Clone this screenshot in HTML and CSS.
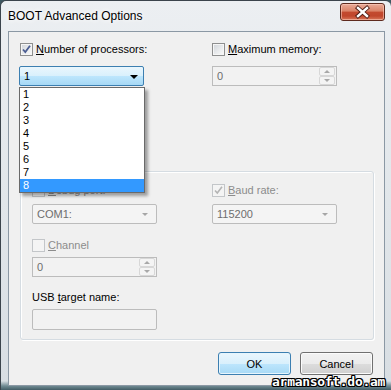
FILE: index.html
```html
<!DOCTYPE html>
<html>
<head>
  <meta charset="UTF-8">
  <title>BOOT Advanced Options</title>
  <link rel="stylesheet" href="styles.css">
</head>
<body>
  <div class="window">
    <div class="titlebar">
      <span class="title">BOOT Advanced Options</span>
      <span class="close">
        <svg width="45" height="18" viewBox="0 0 45 18">
          <path d="M18 5 L27 13 M27 5 L18 13" stroke="#4a1a12" stroke-width="4.2" stroke-linecap="square" fill="none"/>
          <path d="M18 5 L27 13 M27 5 L18 13" stroke="#ffffff" stroke-width="2.4" stroke-linecap="square" fill="none"/>
        </svg>
      </span>
    </div>

    <div class="client">
      <div class="top">
        <div class="col col-left">
          <div class="check-row">
            <span class="cb">
              <svg width="11" height="11" viewBox="0 0 11 11"><path d="M2 5.5 L4.3 8 L9 1.8" fill="none" stroke="#4b5d92" stroke-width="1.8"/></svg>
            </span>
            <span><u>N</u>umber of processors:</span>
          </div>
          <div class="combo focus"><span>1</span><i class="arrow"></i></div>

          <ul class="dropdown">
            <li>1</li>
            <li>2</li>
            <li>3</li>
            <li>4</li>
            <li>5</li>
            <li>6</li>
            <li>7</li>
            <li class="selected">8</li>
          </ul>
        </div>
        <div class="col">
          <div class="check-row">
            <span class="cb"></span>
            <span><u>M</u>aximum memory:</span>
          </div>
          <div class="spin disabled">
            <span>0</span>
            <span class="spin-btns"><span class="up"></span><span class="down"></span></span>
          </div>
        </div>
      </div>

      <div class="group">
        <div class="group-row">
          <div class="gcol">
            <div class="check-row">
              <span class="cb off"></span>
              <span class="dim"><u>D</u>ebug port:</span>
            </div>
            <div class="combo disabled"><span>COM1:</span><i class="arrow"></i></div>
          </div>
          <div class="gcol">
            <div class="check-row">
              <span class="cb off">
                <svg width="11" height="11" viewBox="0 0 11 11"><path d="M2 5.5 L4.3 8 L9 1.8" fill="none" stroke="#b4b4b4" stroke-width="1.6"/></svg>
              </span>
              <span class="dim"><u>B</u>aud rate:</span>
            </div>
            <div class="combo disabled"><span>115200</span><i class="arrow"></i></div>
          </div>
        </div>

        <div class="check-row channel">
          <span class="cb off"></span>
          <span class="dim"><u>C</u>hannel</span>
        </div>
        <div class="spin disabled">
          <span>0</span>
          <span class="spin-btns"><span class="up"></span><span class="down"></span></span>
        </div>

        <div class="label-row">USB <u>t</u>arget name:</div>
        <div class="textbox"></div>
      </div>

      <div class="buttons">
        <button class="btn default">OK</button>
        <button class="btn">Cancel</button>
      </div>
    </div>

    <div class="watermark">armansoft.do.am</div>
  </div>
</body>
</html>
```

FILE: styles.css
```css
* {
  box-sizing: border-box;
}

body {
  margin: 0;
  width: 391px;
  height: 390px;
  overflow: hidden;
  font-family: "Liberation Sans", Arial, sans-serif;
  font-size: 11px;
  color: #000;
  background: #3e5962;
}

u {
  text-decoration: underline;
  text-underline-offset: 1px;
}

.window {
  position: relative;
  width: 391px;
  height: 390px;
  border-top: 1px solid #3b444c;
  border-left: 1px solid #3b444c;
  border-radius: 6px 6px 0 0;
  background: linear-gradient(to bottom, #eceff2 0, #e1e6ea 200px, #d8dee3 380px, #6f8a92 385px, #37515a 390px);
}

/* title bar */
.titlebar {
  display: flex;
  justify-content: space-between;
  align-items: flex-start;
  height: 30px;
  padding-left: 7px;
}

.title {
  margin-top: 7px;
  font-size: 12px;
  line-height: 16px;
  color: #000;
  text-shadow: 0 0 5px #fff, 0 0 8px #fff;
}

.close {
  width: 45px;
  height: 18px;
  margin-top: 2px;
  margin-right: 6px;
  border: 1px solid #5e2a1e;
  border-radius: 3px;
  background: linear-gradient(to bottom, #e9ab98 0, #da8267 45%, #c34a2f 50%, #c0462c 75%, #d9775a 100%);
  box-shadow: inset 0 0 0 1px rgba(255, 210, 195, 0.55);
}

.close svg {
  display: block;
  margin: -1px 0 0 -1px;
}

/* client area */
.client {
  position: relative;
  margin-left: 7px;
  width: 377px;
  height: 355px;
  border: 1px solid #8b98a4;
  background: #f0f0f0;
  padding: 9px 11px 0 10px;
}

.top {
  display: flex;
}

.col {
  position: relative;
}

.col-left {
  width: 193px;
  flex-shrink: 0;
}

.check-row {
  display: flex;
  align-items: center;
  gap: 3px;
  height: 16px;
  white-space: nowrap;
}

.col-left .check-row {
  padding-left: 1px;
}

.cb {
  display: flex;
  align-items: center;
  justify-content: center;
  width: 13px;
  height: 13px;
  border: 1px solid #8e8f8f;
  background: linear-gradient(135deg, #cfd3d8 0, #e9ebed 55%, #fbfbfb 100%);
  box-shadow: inset 0 0 0 1px #f6f6f6;
}

.cb.off {
  border-color: #c3c6c9;
  background: #f4f4f4;
  box-shadow: none;
}

.dim {
  color: #8c8c8c;
}

/* combo boxes */
.combo {
  position: relative;
  display: flex;
  align-items: center;
  margin-top: 9px;
  width: 125px;
  height: 20px;
  padding-left: 4px;
  border: 1px solid #3c7fb1;
  border-radius: 2px;
}

.combo.focus {
  background: linear-gradient(to bottom, #eaf6fd 0, #d9f0fc 50%, #bee6fd 50%, #a7d9f5 100%);
}

.combo.disabled {
  border-color: #bcbcbc;
  background: #f4f4f4;
  color: #6d6d6d;
  margin-top: 6px;
}

.arrow {
  position: absolute;
  right: 5px;
  top: 8px;
  border-left: 4px solid transparent;
  border-right: 4px solid transparent;
  border-top: 4px solid #000;
}

.combo.disabled .arrow {
  right: 8px;
  border-left-width: 3px;
  border-right-width: 3px;
  border-top: 3px solid #a6a6a6;
}

/* dropdown list */
.dropdown {
  position: absolute;
  left: 0;
  top: 46px;
  z-index: 2;
  width: 126px;
  margin: 0;
  padding: 0;
  list-style: none;
  background: #fff;
  border: 1px solid #6a6a6a;
  box-shadow: 3px 3px 3px rgba(0, 0, 0, 0.35);
}

.dropdown li {
  height: 13px;
  line-height: 13px;
  padding-left: 3px;
}

.dropdown li.selected {
  background: #3399ff;
  color: #fff;
}

/* spin boxes */
.spin {
  display: flex;
  justify-content: space-between;
  align-items: center;
  margin-top: 9px;
  width: 125px;
  height: 20px;
  padding-left: 4px;
  border: 1px solid #bcbcbc;
  background: #f2f2f2;
  color: #6d6d6d;
}

.group .spin {
  margin-top: 4px;
}

.spin-btns {
  display: flex;
  flex-direction: column;
  width: 16px;
  height: 18px;
  margin-right: 1px;
}

.spin-btns span {
  position: relative;
  flex: 1;
  border: 1px solid #d7d7d7;
  border-radius: 2px;
  background: #f4f4f4;
}

.spin-btns span::after {
  content: "";
  position: absolute;
  left: 4px;
  top: 2px;
  border-left: 3px solid transparent;
  border-right: 3px solid transparent;
}

.spin-btns .up::after {
  border-bottom: 3px solid #a8a8a8;
}

.spin-btns .down::after {
  border-top: 3px solid #a8a8a8;
}

/* group box */
.group {
  margin-top: 85px;
  margin-left: 1px;
  width: 354px;
  padding: 10px 0 9px 11px;
  border: 1px solid #d5dce2;
  border-radius: 3px;
  box-shadow: inset 1px 1px 0 #fff, 1px 1px 0 #fff;
}

.group-row {
  display: flex;
}

.gcol {
  width: 180px;
  flex-shrink: 0;
}

.gcol + .gcol {
  width: 125px;
}

.check-row.channel {
  margin-top: 13px;
}

.label-row {
  margin-top: 12px;
  height: 16px;
  line-height: 16px;
}

.textbox {
  margin-top: 4px;
  width: 125px;
  height: 21px;
  border: 1px solid #bcbcbc;
  border-radius: 2px;
  background: #f2f2f2;
}

/* buttons */
.buttons {
  display: flex;
  justify-content: flex-end;
  gap: 9px;
  margin-top: 12px;
}

.btn {
  width: 73px;
  height: 23px;
  padding: 0;
  font-family: inherit;
  font-size: 11px;
  color: #000;
  border: 1px solid #707070;
  border-radius: 3px;
  background: linear-gradient(to bottom, #f2f2f2 0, #ebebeb 50%, #dddddd 50%, #cfcfcf 100%);
  box-shadow: inset 0 0 0 1px #fbfbfb;
}

.btn.default {
  border-color: #3c7fb1;
  background: linear-gradient(to bottom, #eaf6fd 0, #d9f0fc 50%, #bee6fd 50%, #a7d9f5 100%);
  box-shadow: inset 0 0 0 1px #e6f5fd;
}

/* watermark */
.watermark {
  position: absolute;
  right: 6px;
  bottom: 2px;
  font-family: "DejaVu Sans Mono", monospace;
  font-weight: bold;
  font-size: 13px;
  line-height: 13px;
  letter-spacing: -0.3px;
  color: #fff;
  text-shadow: 1px 0 0 #000, -1px 0 0 #000, 0 1px 0 #000, 0 -1px 0 #000,
    1px 1px 0 #000, -1px -1px 0 #000, 1px -1px 0 #000, -1px 1px 0 #000;
}
```
